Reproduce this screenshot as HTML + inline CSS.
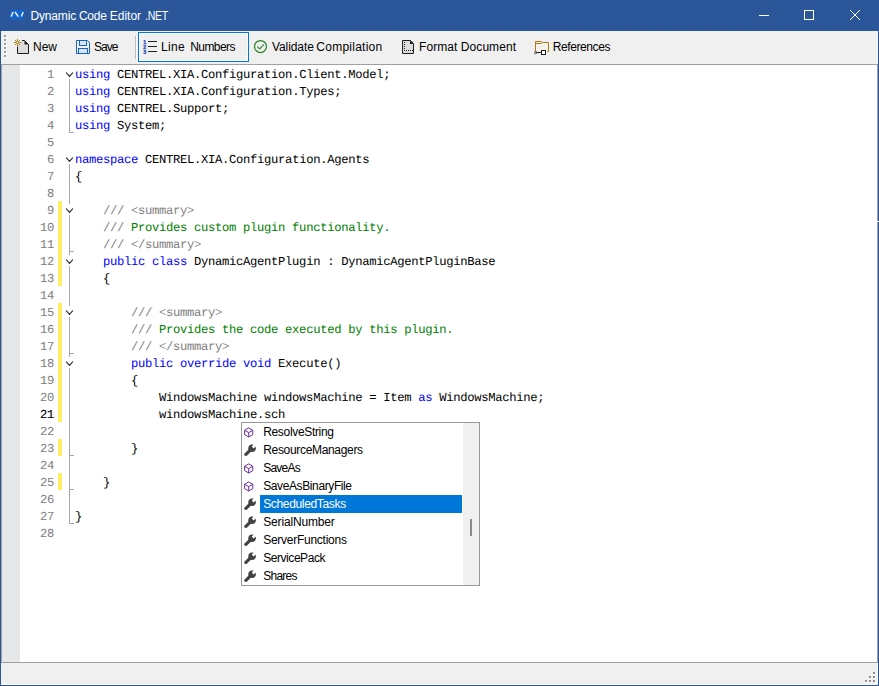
<!DOCTYPE html>
<html><head><meta charset="utf-8"><title>Dynamic Code Editor .NET</title>
<style>
html,body{margin:0;padding:0;}
body{width:879px;height:686px;overflow:hidden;background:#fff;position:relative;font-family:"Liberation Sans",sans-serif;}
div,svg,span{box-sizing:border-box;}
#win{position:absolute;left:0;top:0;width:879px;height:686px;background:#2b579a;}
#title{position:absolute;left:0;top:0;width:879px;height:31px;background:#2b579a;color:#fff;}
#title .tt{position:absolute;left:30px;top:8px;font-size:12px;line-height:16px;white-space:nowrap;}
#tb{position:absolute;left:1px;top:31px;width:877px;height:33px;background:#f0f0f0;}
#tbl{position:absolute;left:1px;top:64px;width:877px;height:1px;background:#a0a0a0;}
#ed{position:absolute;left:1px;top:65px;width:877px;height:597px;background:#fff;}
#mg{position:absolute;left:2px;top:65px;width:18px;height:597px;background:#e6e7e8;}
#edl{position:absolute;left:1px;top:65px;width:1px;height:597px;background:#a0a0a0;}
#edr{position:absolute;left:877px;top:65px;width:1px;height:597px;background:#a0a0a0;}
#sbl{position:absolute;left:1px;top:662px;width:877px;height:1px;background:#a0a0a0;}
#sb{position:absolute;left:1px;top:663px;width:877px;height:22px;background:#f0f0f0;border-right:1px solid #fbfbfb;border-bottom:1px solid #fbfbfb;}
.ln,.cl{position:absolute;font-family:"Liberation Mono",monospace;font-size:12.2px;letter-spacing:-0.31px;line-height:17px;height:17px;white-space:pre;text-rendering:geometricPrecision;margin-top:2px;}
.ln{left:20px;width:34px;text-align:right;color:#7d7d7d;}
.ln.cur{color:#000;-webkit-text-stroke:0.12px #000;}
.cl{left:75px;color:#000;}
.k{color:#0000ff;}
.c{color:#008000;}
.g{color:#808080;}
.yb{position:absolute;left:58px;width:4px;background:#ffee62;}
.vl{position:absolute;left:69px;width:1px;background:#a5a5a5;}
.tk{position:absolute;left:69px;width:5px;height:1px;background:#a5a5a5;}
.cv{position:absolute;left:65px;}
.tbt{position:absolute;top:8px;font-size:12px;line-height:16px;color:#000;white-space:nowrap;}
#pop{position:absolute;left:241px;top:422px;width:239px;height:164px;background:#fff;border:1px solid #999;}
#pop .scr{position:absolute;left:221px;top:0;width:16px;height:162px;background:#f0f0f0;}
#pop .th{position:absolute;left:228px;top:96px;width:2px;height:17px;background:#8c8c8c;}
.pi{position:absolute;left:0;width:220px;height:18px;}
.pi .ic{position:absolute;left:2px;top:4px;}
.pi .ic.w{left:2px;top:3px;}
.pi .pt{position:absolute;left:18px;top:0;width:202px;height:18px;font-size:12px;line-height:18px;padding-left:3.2px;color:#000;white-space:nowrap;letter-spacing:-0.28px;}
.pi .pt.sel{background:#0078d7;color:#fff;}
</style></head><body>

<div id="win"></div>
<div id="title"><span class="tt" style="left:30.4px;letter-spacing:-0.14px">Dynamic</span><span class="tt" style="left:78.9px;letter-spacing:-0.2px">Code</span><span class="tt" style="left:109.8px;letter-spacing:-0.02px">Editor</span><span class="tt" style="left:144.8px;letter-spacing:-0.3px;transform:scaleX(0.88);transform-origin:0 0">.NET</span>
<svg style="position:absolute;left:8px;top:9px" width="18" height="12" viewBox="0 0 18 12"><path d="M4.4 1 H15.4 Q17.1 1 16.7 2.7 L15.5 8.5 Q15.1 10.2 13.6 10.2 H2.8 Q1 10.2 1.4 8.5 L2.8 2.6 Q3.2 1 4.4 1 Z" fill="#1364cb"/><path d="M3.1 7.6 L5.2 3 M7.1 3 L10.2 7.6 M13.3 7.6 L15.2 3" stroke="#fff" stroke-width="1.4" fill="none" stroke-linecap="butt" opacity="0.95"/></svg>
<svg style="position:absolute;left:759px;top:10px" width="102" height="11" viewBox="0 0 102 11">
<path d="M0 5.5 H10" stroke="#fff" stroke-width="1"/>
<rect x="45.5" y="0.5" width="9" height="9" fill="none" stroke="#fff" stroke-width="1"/>
<path d="M91 0 L101 10 M101 0 L91 10" stroke="#fff" stroke-width="1"/>
</svg>
</div>
<div id="tb">
<!-- grip -->
<svg style="position:absolute;left:3px;top:4px" width="4" height="24" viewBox="0 0 4 24">
<g fill="#fff"><rect x="1" y="1" width="2" height="2"/><rect x="1" y="5" width="2" height="2"/><rect x="1" y="9" width="2" height="2"/><rect x="1" y="13" width="2" height="2"/><rect x="1" y="17" width="2" height="2"/><rect x="1" y="21" width="2" height="2"/></g>
<g fill="#a0a0a0"><rect x="0" y="0" width="2" height="2"/><rect x="0" y="4" width="2" height="2"/><rect x="0" y="8" width="2" height="2"/><rect x="0" y="12" width="2" height="2"/><rect x="0" y="16" width="2" height="2"/><rect x="0" y="20" width="2" height="2"/></g>
</svg>
<!-- New icon -->
<svg style="position:absolute;left:12px;top:7px" width="18" height="18" viewBox="0 0 18 18">
<path d="M4.5 5 V15.5 H15.5 V6.5 L11.5 2.5 H8.5" fill="#dcdcdc" stroke="none"/>
<path d="M4.5 8.5 V15.5 H15.5 V6.5 L11.5 2.5 H9" fill="none" stroke="#1e1e1e" stroke-width="1"/>
<path d="M11.5 2.5 V6.5 H15.5 Z" fill="#1e1e1e"/>
<path d="M4.5 1 V8 M1 4.5 H8 M2 2 L7 7 M7 2 L2 7" stroke="#a8780a" stroke-width="0.95" fill="none"/>
<rect x="3.6" y="3.6" width="1.8" height="1.8" fill="#f0f0f0"/>
</svg>
<span class="tbt" id="t1" style="left:32px">New</span>
<!-- Save icon -->
<svg style="position:absolute;left:75px;top:9px" width="14" height="14" viewBox="0 0 14 14">
<path d="M0.5 0.5 H11.5 L13.5 2.5 V13.5 H0.5 Z" fill="#f0f0f0" stroke="#1565c8" stroke-width="1"/>
<rect x="3.5" y="0.5" width="7" height="5" fill="#dbe3ee" stroke="#1565c8" stroke-width="1"/>
<rect x="2.5" y="8.5" width="9" height="5" fill="#dbe3ee" stroke="#1565c8" stroke-width="1"/>
</svg>
<span class="tbt" id="t2" style="left:92.9px;letter-spacing:-0.9px">Save</span>
<div style="position:absolute;left:134px;top:5px;width:1px;height:23px;background:#bdbdbd"></div>
<div style="position:absolute;left:135px;top:5px;width:1px;height:23px;background:#fafafa"></div>
<!-- Line numbers button -->
<div style="position:absolute;left:137px;top:1px;width:111px;height:30px;border:1px solid #0078d7;background:#f0f0f0;box-shadow:inset 0 0 0 1px #fbfbfb"></div>
<svg style="position:absolute;left:141px;top:8px" width="16" height="16" viewBox="0 0 16 16">
<path d="M6 2.5 H15 M6 7.5 H15 M6 12.5 H15" stroke="#1e1e1e" stroke-width="1"/>
<g fill="#2344b0" stroke="#2344b0" stroke-width="0.25" font-family="Liberation Sans" font-weight="bold" font-size="5.3px"><text x="1.2" y="4.7">1</text><text x="1.2" y="9.8">2</text><text x="1.2" y="15">3</text></g>
</svg>
<span class="tbt" style="left:160px;letter-spacing:0.36px">Line</span><span class="tbt" style="left:189.3px;letter-spacing:-0.6px">Numbers</span>
<!-- Validate -->
<svg style="position:absolute;left:252px;top:8px" width="15" height="15" viewBox="0 0 15 15">
<circle cx="7.5" cy="7.5" r="6" fill="none" stroke="#2a872a" stroke-width="1.25"/>
<path d="M4.3 7.6 L6.7 9.9 L10.9 5.3" fill="none" stroke="#2e8b2e" stroke-width="1.1"/>
</svg>
<span class="tbt" style="left:271px;letter-spacing:-0.09px">Validate</span><span class="tbt" style="left:315.3px;letter-spacing:0.25px">Compilation</span>
<!-- Format doc -->
<svg style="position:absolute;left:400px;top:8px" width="14" height="16" viewBox="0 0 14 16">
<path d="M1.5 1.5 H9.5 L12.5 4.5 V14.5 H1.5 Z" fill="#dcdcdc" stroke="#1e1e1e" stroke-width="1"/>
<path d="M9 1.5 V5 H12.5 Z" fill="#1e1e1e"/>
<g fill="#1e1e1e"><rect x="3" y="3" width="1" height="1"/><rect x="3" y="5" width="1" height="1"/><rect x="3" y="7" width="1" height="1"/><rect x="3" y="9" width="1" height="1"/><rect x="3" y="11" width="1" height="1"/><rect x="5" y="11" width="1" height="1"/><rect x="7" y="11" width="1" height="1"/><rect x="9" y="11" width="1" height="1"/><rect x="11" y="11" width="1" height="1"/></g>
</svg>
<span class="tbt" id="t5" style="left:418px;letter-spacing:0.07px">Format Document</span>
<!-- References -->
<svg style="position:absolute;left:533px;top:9px" width="17" height="16" viewBox="0 0 17 16">
<path d="M1.5 11 V1.5 H7.5 L8.5 2.5 H14.5 V11.5 H13.2" fill="#f5f1e8" stroke="#a67c1a" stroke-width="1"/>
<path d="M1.5 3.5 H7.5 L8.5 2.5" fill="none" stroke="#a67c1a" stroke-width="1"/>
<path d="M2.5 12.5 H8" stroke="#1e1e1e" stroke-width="1"/>
<circle cx="1.7" cy="12.6" r="1.1" fill="#f4f4f4" stroke="#1e1e1e" stroke-width="0.9"/>
<rect x="7.5" y="10.5" width="4" height="4" fill="#fff" stroke="#1e1e1e" stroke-width="1"/>
</svg>
<span class="tbt" id="t6" style="left:551.8px;letter-spacing:-0.42px">References</span>
</div>
<div id="tbl"></div>
<div id="ed"></div><div id="mg"></div><div id="edl"></div><div id="edr"></div>
<div class="ln" style="top:65px">1</div>
<div class="cl" style="top:65px"><span class="k">using</span> CENTREL.XIA.Configuration.Client.Model;</div>
<div class="ln" style="top:82px">2</div>
<div class="cl" style="top:82px"><span class="k">using</span> CENTREL.XIA.Configuration.Types;</div>
<div class="ln" style="top:99px">3</div>
<div class="cl" style="top:99px"><span class="k">using</span> CENTREL.Support;</div>
<div class="ln" style="top:116px">4</div>
<div class="cl" style="top:116px"><span class="k">using</span> System;</div>
<div class="ln" style="top:133px">5</div>
<div class="ln" style="top:150px">6</div>
<div class="cl" style="top:150px"><span class="k">namespace</span> CENTREL.XIA.Configuration.Agents</div>
<div class="ln" style="top:167px">7</div>
<div class="cl" style="top:167px">{</div>
<div class="ln" style="top:184px">8</div>
<div class="ln" style="top:201px">9</div>
<div class="cl" style="top:201px">    <span class="g">/// &lt;summary&gt;</span></div>
<div class="ln" style="top:218px">10</div>
<div class="cl" style="top:218px">    <span class="g">///</span><span class="c"> Provides custom plugin functionality.</span></div>
<div class="ln" style="top:235px">11</div>
<div class="cl" style="top:235px">    <span class="g">/// &lt;/summary&gt;</span></div>
<div class="ln" style="top:252px">12</div>
<div class="cl" style="top:252px">    <span class="k">public class</span> DynamicAgentPlugin : DynamicAgentPluginBase</div>
<div class="ln" style="top:269px">13</div>
<div class="cl" style="top:269px">    {</div>
<div class="ln" style="top:286px">14</div>
<div class="ln" style="top:303px">15</div>
<div class="cl" style="top:303px">        <span class="g">/// &lt;summary&gt;</span></div>
<div class="ln" style="top:320px">16</div>
<div class="cl" style="top:320px">        <span class="g">///</span><span class="c"> Provides the code executed by this plugin.</span></div>
<div class="ln" style="top:337px">17</div>
<div class="cl" style="top:337px">        <span class="g">/// &lt;/summary&gt;</span></div>
<div class="ln" style="top:354px">18</div>
<div class="cl" style="top:354px">        <span class="k">public override void</span> Execute()</div>
<div class="ln" style="top:371px">19</div>
<div class="cl" style="top:371px">        {</div>
<div class="ln" style="top:388px">20</div>
<div class="cl" style="top:388px">            WindowsMachine windowsMachine = Item <span class="k">as</span> WindowsMachine;</div>
<div class="ln cur" style="top:405px">21</div>
<div class="cl" style="top:405px">            windowsMachine.sch</div>
<div class="ln" style="top:422px">22</div>
<div class="ln" style="top:439px">23</div>
<div class="cl" style="top:439px">        }</div>
<div class="ln" style="top:456px">24</div>
<div class="ln" style="top:473px">25</div>
<div class="cl" style="top:473px">    }</div>
<div class="ln" style="top:490px">26</div>
<div class="ln" style="top:507px">27</div>
<div class="cl" style="top:507px">}</div>
<div class="ln" style="top:524px">28</div>
<div class="yb" style="top:201px;height:85px"></div>
<div class="yb" style="top:303px;height:119px"></div>
<div class="yb" style="top:439px;height:17px"></div>
<div class="yb" style="top:473px;height:17px"></div>
<svg class="cv" style="top:72px" width="9" height="6" viewBox="0 0 9 6"><path d="M1.4 0.9 L4.5 4.4 L7.6 0.9" fill="none" stroke="#303030" stroke-width="1.15" stroke-linecap="round" stroke-linejoin="miter"/></svg>
<div class="vl" style="top:79px;height:54px"></div>
<div class="tk" style="top:132px"></div>
<svg class="cv" style="top:157px" width="9" height="6" viewBox="0 0 9 6"><path d="M1.4 0.9 L4.5 4.4 L7.6 0.9" fill="none" stroke="#303030" stroke-width="1.15" stroke-linecap="round" stroke-linejoin="miter"/></svg>
<div class="vl" style="top:164px;height:40px"></div>
<svg class="cv" style="top:208px" width="9" height="6" viewBox="0 0 9 6"><path d="M1.4 0.9 L4.5 4.4 L7.6 0.9" fill="none" stroke="#303030" stroke-width="1.15" stroke-linecap="round" stroke-linejoin="miter"/></svg>
<div class="vl" style="top:215px;height:40px"></div>
<div class="tk" style="top:251px"></div>
<svg class="cv" style="top:259px" width="9" height="6" viewBox="0 0 9 6"><path d="M1.4 0.9 L4.5 4.4 L7.6 0.9" fill="none" stroke="#303030" stroke-width="1.15" stroke-linecap="round" stroke-linejoin="miter"/></svg>
<div class="vl" style="top:266px;height:40px"></div>
<svg class="cv" style="top:310px" width="9" height="6" viewBox="0 0 9 6"><path d="M1.4 0.9 L4.5 4.4 L7.6 0.9" fill="none" stroke="#303030" stroke-width="1.15" stroke-linecap="round" stroke-linejoin="miter"/></svg>
<div class="vl" style="top:317px;height:40px"></div>
<div class="tk" style="top:353px"></div>
<svg class="cv" style="top:361px" width="9" height="6" viewBox="0 0 9 6"><path d="M1.4 0.9 L4.5 4.4 L7.6 0.9" fill="none" stroke="#303030" stroke-width="1.15" stroke-linecap="round" stroke-linejoin="miter"/></svg>
<div class="vl" style="top:368px;height:156px"></div>
<div class="tk" style="top:455px"></div>
<div class="tk" style="top:489px"></div>
<div class="tk" style="top:523px"></div>
<div id="pop">
<div class="scr"></div><div class="th"></div>
<div class="pi" style="top:0px"><svg class="ic" width="13" height="12" viewBox="0 0 13 12"><path d="M4.7 0.9 L8.8 3.3 L8.8 7.6 L4.7 10 L0.6 7.6 L0.6 3.3 Z M0.6 3.3 L4.7 5.6 L8.8 3.3 M4.7 5.6 L4.7 10" fill="none" stroke="#6a2c9a" stroke-width="1.0" stroke-linejoin="round"/></svg><span class="pt" style="letter-spacing:-0.33px">ResolveString</span></div>
<div class="pi" style="top:18px"><svg class="ic w" width="13" height="12" viewBox="0 0 13 12"><path d="M1.9 10.4 L7 5.3" stroke="#424242" stroke-width="3.2" stroke-linecap="round" fill="none"/><circle cx="8.1" cy="4.2" r="3.8" fill="#424242"/><path d="M8.7 3.6 L13 -0.7" stroke="#fff" stroke-width="2.8" fill="none"/></svg><span class="pt" style="letter-spacing:-0.32px">ResourceManagers</span></div>
<div class="pi" style="top:36px"><svg class="ic" width="13" height="12" viewBox="0 0 13 12"><path d="M4.7 0.9 L8.8 3.3 L8.8 7.6 L4.7 10 L0.6 7.6 L0.6 3.3 Z M0.6 3.3 L4.7 5.6 L8.8 3.3 M4.7 5.6 L4.7 10" fill="none" stroke="#6a2c9a" stroke-width="1.0" stroke-linejoin="round"/></svg><span class="pt" style="letter-spacing:-0.78px">SaveAs</span></div>
<div class="pi" style="top:54px"><svg class="ic" width="13" height="12" viewBox="0 0 13 12"><path d="M4.7 0.9 L8.8 3.3 L8.8 7.6 L4.7 10 L0.6 7.6 L0.6 3.3 Z M0.6 3.3 L4.7 5.6 L8.8 3.3 M4.7 5.6 L4.7 10" fill="none" stroke="#6a2c9a" stroke-width="1.0" stroke-linejoin="round"/></svg><span class="pt" style="letter-spacing:-0.39px">SaveAsBinaryFile</span></div>
<div class="pi" style="top:72px"><svg class="ic w" width="13" height="12" viewBox="0 0 13 12"><path d="M1.9 10.4 L7 5.3" stroke="#424242" stroke-width="3.2" stroke-linecap="round" fill="none"/><circle cx="8.1" cy="4.2" r="3.8" fill="#424242"/><path d="M8.7 3.6 L13 -0.7" stroke="#fff" stroke-width="2.8" fill="none"/></svg><span class="pt sel" style="letter-spacing:-0.34px">ScheduledTasks</span></div>
<div class="pi" style="top:90px"><svg class="ic w" width="13" height="12" viewBox="0 0 13 12"><path d="M1.9 10.4 L7 5.3" stroke="#424242" stroke-width="3.2" stroke-linecap="round" fill="none"/><circle cx="8.1" cy="4.2" r="3.8" fill="#424242"/><path d="M8.7 3.6 L13 -0.7" stroke="#fff" stroke-width="2.8" fill="none"/></svg><span class="pt" style="letter-spacing:-0.16px">SerialNumber</span></div>
<div class="pi" style="top:108px"><svg class="ic w" width="13" height="12" viewBox="0 0 13 12"><path d="M1.9 10.4 L7 5.3" stroke="#424242" stroke-width="3.2" stroke-linecap="round" fill="none"/><circle cx="8.1" cy="4.2" r="3.8" fill="#424242"/><path d="M8.7 3.6 L13 -0.7" stroke="#fff" stroke-width="2.8" fill="none"/></svg><span class="pt" style="letter-spacing:-0.26px">ServerFunctions</span></div>
<div class="pi" style="top:126px"><svg class="ic w" width="13" height="12" viewBox="0 0 13 12"><path d="M1.9 10.4 L7 5.3" stroke="#424242" stroke-width="3.2" stroke-linecap="round" fill="none"/><circle cx="8.1" cy="4.2" r="3.8" fill="#424242"/><path d="M8.7 3.6 L13 -0.7" stroke="#fff" stroke-width="2.8" fill="none"/></svg><span class="pt" style="letter-spacing:-0.44px">ServicePack</span></div>
<div class="pi" style="top:144px"><svg class="ic w" width="13" height="12" viewBox="0 0 13 12"><path d="M1.9 10.4 L7 5.3" stroke="#424242" stroke-width="3.2" stroke-linecap="round" fill="none"/><circle cx="8.1" cy="4.2" r="3.8" fill="#424242"/><path d="M8.7 3.6 L13 -0.7" stroke="#fff" stroke-width="2.8" fill="none"/></svg><span class="pt" style="letter-spacing:-0.73px">Shares</span></div>
</div>
<div style="position:absolute;left:877px;top:221px;width:2px;height:1px;background:#fff"></div>
<div id="sbl"></div><div id="sb">
<svg style="position:absolute;left:864px;top:9px" width="12" height="12" viewBox="0 0 12 12">
<g fill="#fdfdfd"><rect x="9" y="1" width="2" height="2"/><rect x="5" y="5" width="2" height="2"/><rect x="9" y="5" width="2" height="2"/><rect x="1" y="9" width="2" height="2"/><rect x="5" y="9" width="2" height="2"/><rect x="9" y="9" width="2" height="2"/></g>
<g fill="#8e8e8e"><rect x="8" y="0" width="2" height="2"/><rect x="4" y="4" width="2" height="2"/><rect x="8" y="4" width="2" height="2"/><rect x="0" y="8" width="2" height="2"/><rect x="4" y="8" width="2" height="2"/><rect x="8" y="8" width="2" height="2"/></g>
</svg>
</div>
</body></html>
